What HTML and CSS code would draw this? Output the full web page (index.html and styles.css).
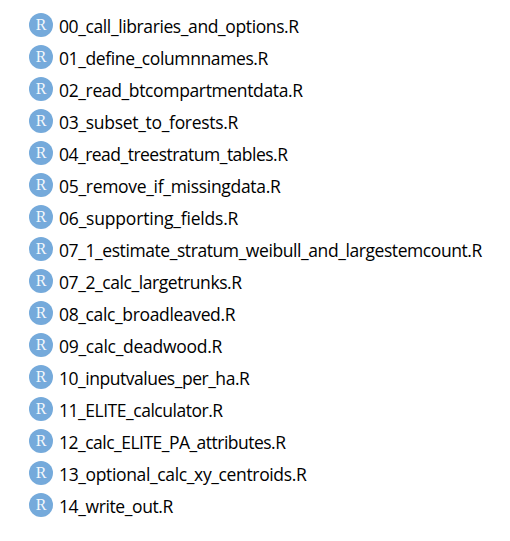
FILE: index.html
```html
<!DOCTYPE html>
<html lang="en">
<head>
<meta charset="utf-8">
<title>R scripts</title>
<link rel="stylesheet" href="styles.css">
</head>
<body>
<ul class="files">
<li><span class="icon">R</span><span class="name s39">00_call_libraries_and_options.R</span></li>
<li><span class="icon">R</span><span class="name s39">01_define_columnnames.R</span></li>
<li><span class="icon">R</span><span class="name s36">02_read_btcompartmentdata.R</span></li>
<li><span class="icon">R</span><span class="name s30">03_subset_to_forests.R</span></li>
<li><span class="icon">R</span><span class="name s51">04_read_treestratum_tables.R</span></li>
<li><span class="icon">R</span><span class="name s30">05_remove_if_missingdata.R</span></li>
<li><span class="icon">R</span><span class="name s19">06_supporting_fields.R</span></li>
<li><span class="icon">R</span><span class="name s42">07_1_estimate_stratum_weibull_and_largestemcount.R</span></li>
<li><span class="icon">R</span><span class="name s42">07_2_calc_largetrunks.R</span></li>
<li><span class="icon">R</span><span class="name s36">08_calc_broadleaved.R</span></li>
<li><span class="icon">R</span><span class="name s27">09_calc_deadwood.R</span></li>
<li><span class="icon">R</span><span class="name s47">10_inputvalues_per_ha.R</span></li>
<li><span class="icon">R</span><span class="name s47">11_ELITE_calculator.R</span></li>
<li><span class="icon">R</span><span class="name s51">12_calc_ELITE_PA_attributes.R</span></li>
<li><span class="icon">R</span><span class="name s36">13_optional_calc_xy_centroids.R</span></li>
<li><span class="icon">R</span><span class="name s39">14_write_out.R</span></li>
</ul>
</body>
</html>
```
FILE: styles.css
```css
body { margin: 0; background: #fff; color: #000; font-family: "Open Sans", "Noto Sans", sans-serif; font-size: 17.5px; }
.files { list-style: none; margin: 0; padding: 9px 0 0 29px; }
.files li { display: flex; align-items: center; gap: 6px; height: 32px; white-space: nowrap; }
.icon { width: 24px; height: 24px; flex: none; border-radius: 50%; background: #75aadb; color: #f4f8fc; font: 16px/23px "Liberation Serif", serif; text-align: center; }
.name { padding-top: 2px; line-height: 24px; }
/* Tracking steps, in hundredths of a pixel */
.s19 { letter-spacing: -0.19px; }
.s27 { letter-spacing: -0.27px; }
.s30 { letter-spacing: -0.3px; }
.s36 { letter-spacing: -0.36px; }
.s39 { letter-spacing: -0.39px; }
.s42 { letter-spacing: -0.42px; }
.s47 { letter-spacing: -0.47px; }
.s51 { letter-spacing: -0.51px; }
```
